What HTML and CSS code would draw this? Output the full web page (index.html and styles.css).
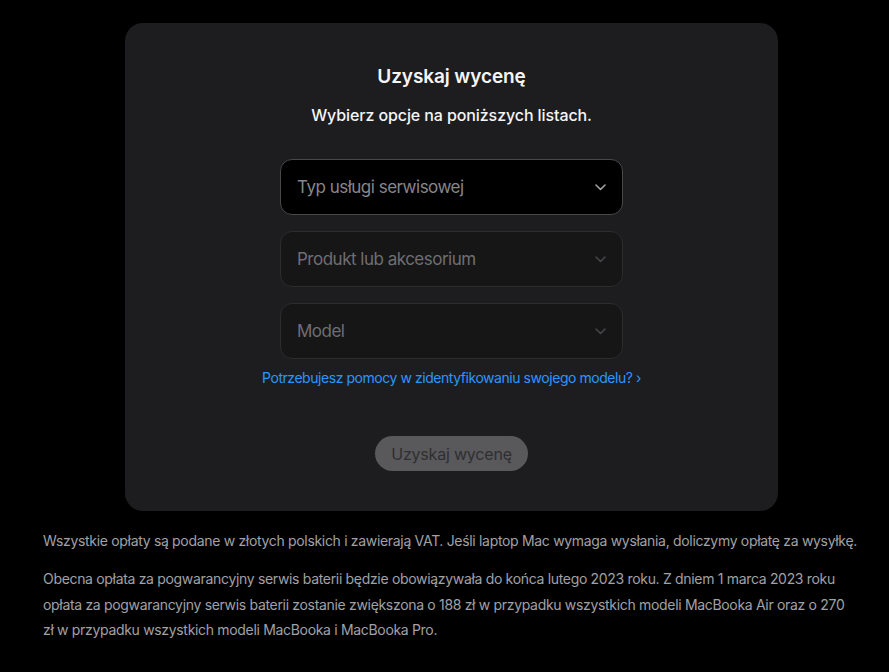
FILE: index.html
```html
<!DOCTYPE html>
<html lang="pl">
<head>
  <meta charset="UTF-8" />
  <meta name="viewport" content="width=device-width, initial-scale=1" />
  <title>Uzyskaj wycenę</title>
  <link rel="stylesheet" href="styles.css">
</head>
<body>
  <div class="quote">
    <h2 class="title">Uzyskaj wycenę</h2>
    <p class="subtitle">Wybierz opcje na poniższych listach.</p>

    <div class="selects">
      <div class="select active">
        <span>Typ usługi serwisowej</span>
        <svg class="chevron" width="11" height="7" viewBox="0 0 11 7"><path d="M1 1l4.5 4.5L10 1" fill="none" stroke="currentColor" stroke-width="1.6" stroke-linecap="round" stroke-linejoin="round"/></svg>
      </div>
      <div class="select">
        <span>Produkt lub akcesorium</span>
        <svg class="chevron" width="11" height="7" viewBox="0 0 11 7"><path d="M1 1l4.5 4.5L10 1" fill="none" stroke="currentColor" stroke-width="1.6" stroke-linecap="round" stroke-linejoin="round"/></svg>
      </div>
      <div class="select">
        <span>Model</span>
        <svg class="chevron" width="11" height="7" viewBox="0 0 11 7"><path d="M1 1l4.5 4.5L10 1" fill="none" stroke="currentColor" stroke-width="1.6" stroke-linecap="round" stroke-linejoin="round"/></svg>
      </div>
    </div>

    <a class="help" href="#">Potrzebujesz pomocy w zidentyfikowaniu swojego modelu? ›</a>

    <button class="submit" disabled>Uzyskaj wycenę</button>
  </div>

  <div class="notes">
    <p>Wszystkie opłaty są podane w złotych polskich i zawierają VAT. Jeśli laptop Mac wymaga wysłania, doliczymy opłatę za wysyłkę.</p>
    <p>Obecna opłata za pogwarancyjny serwis baterii będzie obowiązywała do końca lutego 2023 roku. Z dniem 1 marca 2023 roku opłata za pogwarancyjny serwis baterii zostanie zwiększona o 188 zł w przypadku wszystkich modeli MacBooka Air oraz o 270 zł w przypadku wszystkich modeli MacBooka i MacBooka Pro.</p>
  </div>
</body>
</html>
```

FILE: styles.css
```css
body {
  font-family: Inter, 'Noto Sans', sans-serif;
  background-color: #000;
  color: #f5f5f7;
  margin: 0;
  padding-top: 23px;
}
.quote {
  background-color: #1d1d1f;
  border-radius: 18px;
  width: 653px;
  height: 488px;
  box-sizing: border-box;
  margin-left: 125px;
  padding-top: 42px;
  display: flex;
  flex-direction: column;
  align-items: center;
}
.title {
  font-size: 19px;
  font-weight: 600;
  margin: 0;
  line-height: 24px;
  letter-spacing: -0.1px;
}
.subtitle {
  font-size: 16px;
  font-weight: 500;
  margin: 14px 0 0;
  line-height: 24px;
  letter-spacing: -0.1px;
}
.selects {
  margin-top: 32px;
  display: flex;
  flex-direction: column;
  gap: 16px;
}
.select {
  width: 343px;
  height: 56px;
  box-sizing: border-box;
  border: 1px solid #2c2c2e;
  border-radius: 12px;
  background-color: #161617;
  color: #6e6e73;
  padding: 0 16px;
  display: flex;
  align-items: center;
  justify-content: space-between;
  font-size: 17px;
  letter-spacing: -0.5px;
}
.select.active {
  background-color: #000;
  border-color: #48484a;
  color: #86868b;
}
.select .chevron {
  color: #45454a;
}
.select.active .chevron {
  color: #a1a1a6;
}
.help {
  margin-top: 10px;
  color: #2997ff;
  font-size: 14px;
  line-height: 18px;
  letter-spacing: -0.45px;
  text-decoration: none;
}
.submit {
  margin-top: 49px;
  height: 35px;
  padding: 0 16px;
  border: none;
  border-radius: 18px;
  background-color: #59595b;
  color: #2f2f31;
  font-family: inherit;
  font-size: 16px;
  letter-spacing: -0.2px;
}
.notes {
  padding: 17px 32px 0 43px;
  color: #a1a1a6;
  font-size: 14px;
  line-height: 25.5px;
  letter-spacing: -0.32px;
}
.notes p {
  margin: 0 0 12.5px;
}
```
